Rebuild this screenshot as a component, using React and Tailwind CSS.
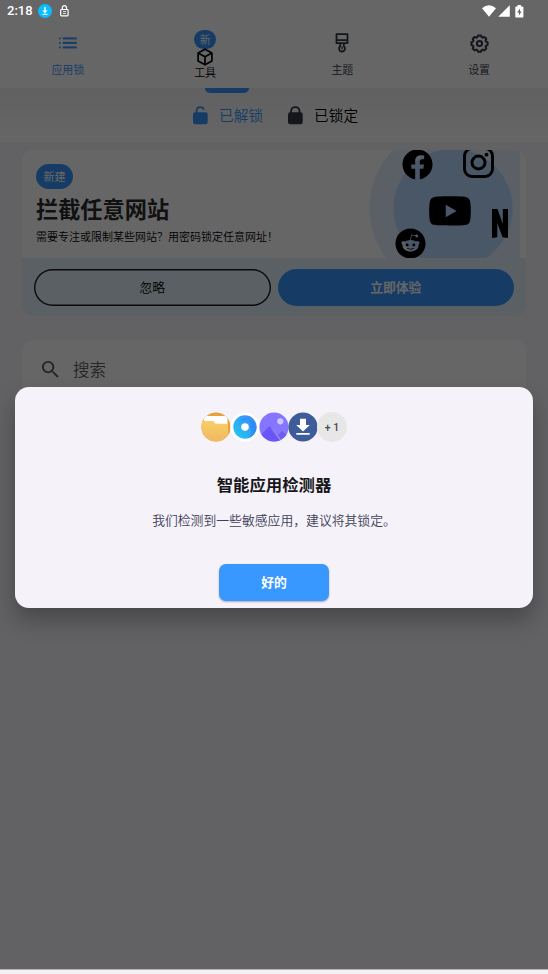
import React from 'react';
import { FaFacebook, FaYoutube, FaReddit } from 'react-icons/fa';
import { MdSearch, MdSignalWifi4Bar, MdSignalCellular4Bar } from 'react-icons/md';

const ListIcon = () => (
  <svg className="-ml-px" width="18" height="12" viewBox="0 0 18 12" fill="currentColor">
    {[0.5, 5, 9.5].map((y) => (
      <g key={y}>
        <rect x="0" y={y} width="1.8" height="1.8" rx="0.6" />
        <rect x="3.8" y={y - 0.1} width="14" height="2" />
      </g>
    ))}
  </svg>
);

const BoxIcon = () => (
  <svg width="18" height="18" viewBox="0 0 18 18" fill="none" stroke="currentColor" strokeWidth="1.7" strokeLinejoin="round">
    <path d="M9 1.200 15.900 5v8L9 16.800 2.100 13V5z" />
    <path d="M2.100 5 9 8.800 15.900 5M9 8.800v8" />
  </svg>
);

const BrushIcon = () => (
  <svg className="-ml-px" width="14" height="20" viewBox="0 0 14 20" fill="none" stroke="currentColor" strokeWidth="1.8" strokeLinejoin="round">
    <path d="M1.500 1.200h11v8.900h-11zM1.500 7.200h11M5.200 10.400v2.900c-1.200.9-1.300 2.300-1.100 3 .4 1.400 1.500 2.300 2.900 2.300s2.500-.9 2.900-2.300c.2-.7.1-2.100-1.100-3v-2.900" />
    <path d="M7 13.600v2.600" strokeWidth="1.4" />
  </svg>
);

const GearIcon = () => (
  <svg className="-ml-px" width="19" height="19" viewBox="0 0 19 19" fill="none" stroke="currentColor" strokeWidth="2" strokeLinejoin="round">
    <path d="M8 1.500h3l.6 1.700 1.100.5 1.700-.8 1.900 1.900-.8 1.700.5 1.100 1.600.6v2.900l-1.600.6-.5 1.100.8 1.700-1.900 1.900-1.700-.8-1.100.5-.6 1.600H8l-.6-1.600-1.100-.5-1.700.8-1.900-1.900.8-1.700-.5-1.100-1.600-.6V8.200l1.600-.6.5-1.100-.8-1.700 1.900-1.900 1.700.8 1.100-.5z" />
    <circle cx="9.500" cy="9.500" r="2.600" />
  </svg>
);

const PadLock = ({ open }) => (
  <svg width="15" height="19" viewBox="0 0 15 19" fill="none">
    <rect x="0" y="6.300" width="14.700" height="12" rx="2.200" fill="currentColor" />
    <path
      d={open ? 'M3.600 7.500V4.900c0-2.200 1.500-3.800 3.700-3.800 1.800 0 3 .9 3.500 2.600' : 'M3.100 7.500V5.200c0-2.400 1.800-4.100 4.200-4.100s4.200 1.700 4.200 4.100v2.300'}
      stroke="currentColor"
      strokeWidth="1.800"
    />
  </svg>
);

const StatusBar = () => (
  <div className="absolute inset-x-0 top-0 z-20 flex h-[22px] items-center pl-[7px] pr-[24px] text-white">
    <span className="w-[31px] font-[Roboto] text-[13px] font-medium leading-[22px]">2:18</span>
    <svg width="14" height="14" viewBox="0 0 14 14">
      <circle cx="7" cy="7" r="7" fill="#0bbcff" />
      <path d="M6.300 3h1.400v3.600h2L7 9.200 4.300 6.600h2zM4.300 9.800h5.400v1H4.300z" fill="white" />
    </svg>
    <svg className="ml-[8px]" width="9" height="12" viewBox="0 0 9 12" fill="none" stroke="white">
      <rect x="0.700" y="4.500" width="7.400" height="6.300" rx="0.800" strokeWidth="1.200" />
      <path d="M2.300 4.500V2.800c0-1.200.8-2.100 2.100-2.100s2.100.9 2.100 2.100v1.700" strokeWidth="1.200" />
      <path d="M3 6.600h3M3 8.600h3" strokeWidth="0.800" />
    </svg>
    <svg className="ml-auto" width="14" height="12" viewBox="0 0 14 12" fill="currentColor">
      <path d="M0 3.300Q7-2.700 14 3.300L7 11.800z" />
    </svg>
    <svg className="ml-[2px]" width="12" height="12" viewBox="0 0 12 12" fill="currentColor">
      <path d="M11.800.2v11.500H.2z" />
    </svg>
    <svg className="ml-[5px]" width="9" height="13" viewBox="0 0 9 13" fill="currentColor">
      <path d="M2.500 0h3.600v1.400H7.500c.5 0 .9.4.9.9v9.400c0 .5-.4.9-.9.900H1.200c-.5 0-.9-.4-.9-.9V2.300c0-.5.4-.9.900-.9h1.300z" />
      <path d="m5 3.500-2.800 4h1.700v3l2.700-4H5z" fill="#666" />
    </svg>
  </div>
);

const NavItem = ({ icon, label, active }) => (
  <div className={`flex flex-1 flex-col items-center pt-[32px] ${active ? 'text-[#3797ff]' : 'text-[#333748]'}`}>
    <div className="flex h-[22px] items-center">{icon}</div>
    <span className="-ml-px mt-[7px] text-[11px] font-[350] leading-4">{label}</span>
  </div>
);

const PromoArt = () => (
  <div className="relative mr-[6px] h-[108px] w-[151px] overflow-hidden text-black">
    <svg className="absolute inset-0" width="151" height="108" viewBox="0 0 151 108">
      <circle cx="84.500" cy="58" r="84" fill="#e2f0ff" />
      <path d="M120 0h31v108h-31z" fill="#e2f0ff" />
      <circle cx="84" cy="58.500" r="59.500" fill="#b9d9ff" />
    </svg>
    <FaFacebook className="absolute left-[33px] -top-[1px]" size={31} />
    <svg className="absolute left-[94px] -top-[3px]" width="31" height="31" viewBox="0 0 31 31" fill="none" stroke="black">
      <rect x="1.500" y="1.500" width="28" height="28" rx="7.500" strokeWidth="2.900" />
      <circle cx="15.500" cy="15.500" r="6.500" strokeWidth="2.900" />
      <circle cx="23.500" cy="7.700" r="1.900" fill="black" stroke="none" />
    </svg>
    <FaYoutube className="absolute left-[59px] top-[39px]" size={44} />
    <FaReddit className="absolute left-[26px] top-[78px]" size={31} />
    <svg className="absolute left-[123px] top-[59px]" width="16" height="29" viewBox="0 0 16 29">
      <path d="M0 0h5.500l5.300 15V0H16v29l-5.500-.7L5.300 14v14.300L0 29z" fill="black" />
    </svg>
  </div>
);

const PromoCard = () => (
  <section className="mx-[22px] mt-2 overflow-hidden rounded-[11px] bg-white">
    <div className="flex h-[108px] justify-between">
      <div className="pl-[14px] pt-[14px]">
        <span className="flex h-[25px] w-[37px] items-center justify-center rounded-full bg-[#3797ff] text-[11px] text-white">新建</span>
        <h2 className="mt-[4px] text-[22.2px] font-bold leading-[30px] text-[#2c2c2e]">拦截任意网站</h2>
        <p className="mt-[5px] whitespace-nowrap text-[11px] font-[350] leading-4 text-black">需要专注或限制某些网站？用密码锁定任意网址！</p>
      </div>
      <PromoArt />
    </div>
    <div className="flex h-[58px] gap-[7px] bg-[#e2f0f8] px-3 pt-[11px]">
      <button className="h-[37px] flex-1 rounded-full pb-[2px] text-[12.8px] font-[350] text-black shadow-[inset_0_0_0_1.4px_#1a1a1e]">忽略</button>
      <button className="h-[37px] flex-1 rounded-full bg-[#3797ff] pb-[2px] text-[12.8px] font-bold text-white">立即体验</button>
    </div>
  </section>
);

const AppIcons = () => (
  <div className="flex justify-center">
    <svg width="30" height="30" viewBox="0 0 30 30">
      <defs>
        <clipPath id="folderClip"><circle cx="15" cy="15" r="14.600" /></clipPath>
        <linearGradient id="folderFill" x1="0" y1="0" x2="0" y2="1">
          <stop offset="0" stopColor="#f6cf65" />
          <stop offset="1" stopColor="#f3bb63" />
        </linearGradient>
      </defs>
      <g clipPath="url(#folderClip)">
        <path d="M0 0h30v30H0z" fill="#e8a23c" />
        <path d="M3 4h23.500v9H3z" fill="white" />
        <path d="M0 9h11.500q1.500 0 2 1.500t2 1.200H27V26H0z" fill="url(#folderFill)" />
        <path d="M0 26h30v4H0z" fill="#f3bb63" />
      </g>
    </svg>
    <svg className="-ml-px" width="30" height="30" viewBox="0 0 30 30">
      <defs>
        <linearGradient id="ringFill" x1="0" y1="1" x2="1" y2="0">
          <stop offset="0" stopColor="#20ccf0" />
          <stop offset="1" stopColor="#3f83ff" />
        </linearGradient>
      </defs>
      <circle cx="15" cy="15" r="14.600" fill="white" />
      <circle cx="15" cy="15" r="11.700" fill="url(#ringFill)" />
      <path d="M10 9.500A11 11 0 0 1 26.700 15a11.700 11.700 0 0 1-9 11.300A8 8 0 0 0 20 15a5 5 0 0 0-10-5.500z" fill="#287de8" opacity=".5" />
      <circle cx="15" cy="15" r="3.800" fill="white" />
    </svg>
    <svg className="-ml-px" width="30" height="30" viewBox="0 0 30 30">
      <clipPath id="photoClip"><circle cx="15" cy="15" r="14.600" /></clipPath>
      <g clipPath="url(#photoClip)">
        <path d="M0 0h30v30H0z" fill="#8575ff" />
        <path d="M0 25 9 15.500Q10.500 13.500 12 15.500L25 30H0z" fill="#6a55fa" />
        <path d="m11.500 15.500 3.500 2.500 9.500 12H22z" fill="#9789dc" />
        <path d="m19 23 4-4 8 7v4h-7z" fill="#6f5cf5" />
        <circle cx="21.300" cy="9.300" r="3.100" fill="#cdc6ff" />
      </g>
    </svg>
    <svg className="-ml-px" width="30" height="30" viewBox="0 0 30 30">
      <circle cx="15" cy="15" r="14.600" fill="#3d5c98" />
      <path d="M12 6.800h6v6.200h3.800L15 19.400 8.200 13H12zM8.300 20.900h13.400v1.900H8.300z" fill="white" />
    </svg>
    <span className="-ml-px flex size-[30px] items-center justify-center rounded-full bg-[#e7e7e7] pt-px font-[Roboto] text-[10.5px] font-medium text-[#48484c]">+ 1</span>
  </div>
);

const DetectorDialog = () => (
  <div className="absolute left-[15px] top-[387px] z-20 flex h-[221px] w-[518px] flex-col items-center rounded-[14px] bg-[#f5f3f9] pt-[25px] shadow-[0_12px_22px_rgba(0,0,0,0.28)]">
    <AppIcons />
    <h1 className="mt-[30px] text-[16.4px] font-bold leading-6 text-[#17171b]">智能应用检测器</h1>
    <p className="mt-[14px] text-[12.83px] font-[350] leading-5 text-[#3d4058]">我们检测到一些敏感应用，建议将其锁定。</p>
    <button className="mt-[34px] h-[37px] w-[110px] rounded-[7px] bg-[#3998ff] pb-px text-[12.8px] font-bold text-white shadow-[0_1px_2px_rgba(0,0,0,0.3)]">
      好的
    </button>
  </div>
);

const App = () => {
  return (
    <div className="relative flex h-[974px] w-[548px] flex-col overflow-hidden bg-[#f3f1f3] font-['Noto_Sans_CJK_SC',sans-serif]">
      <StatusBar />

      <div className="h-[969px] bg-[#f5f3f9]">
        <nav className="flex h-[88px] bg-white">
          <NavItem icon={<ListIcon />} label="应用锁" active />
          <div className="flex flex-1 flex-col items-center pr-px pt-[30px] text-black">
            <span className="flex h-[19px] w-[22px] items-center justify-center rounded-full bg-[#3797ff] text-[11px] font-[350] text-white">新</span>
            <div className="-mt-[1px]"><BoxIcon /></div>
            <span className="-mt-[2px] text-[11px] font-[350] leading-4">工具</span>
          </div>
          <NavItem icon={<BrushIcon />} label="主题" />
          <NavItem icon={<GearIcon />} label="设置" />
        </nav>

        {/* Locked / unlocked tabs */}
        <div className="relative flex h-[54px] bg-linear-to-b from-[#f2f1f5] to-white text-[14.7px] font-[350]">
          <div className="absolute left-[205px] top-0 h-[5px] w-[44px] rounded-b-[5px] bg-[#3797ff]" />
          <div className="ml-[193px] flex items-center gap-[11px] text-[#3797ff]">
            <PadLock open />
            <span>已解锁</span>
          </div>
          <div className="ml-[25px] flex items-center gap-[11px] text-[#333748]">
            <PadLock />
            <span className="text-black">已锁定</span>
          </div>
        </div>

        <PromoCard />

        <div className="mx-[22px] mt-6 flex h-[58px] items-center rounded-t-[11px] bg-white pl-[17px] text-[16.5px] font-[350] text-[#606060]">
          <MdSearch size={23} />
          <span className="ml-[11px]">搜索</span>
        </div>
      </div>

      {/* Scrim */}
      <div className="absolute inset-x-0 top-0 z-10 h-[970px] border-b border-[#b5b2b5] bg-black/60" />
      <DetectorDialog />
    </div>
  );
};

export default App;
